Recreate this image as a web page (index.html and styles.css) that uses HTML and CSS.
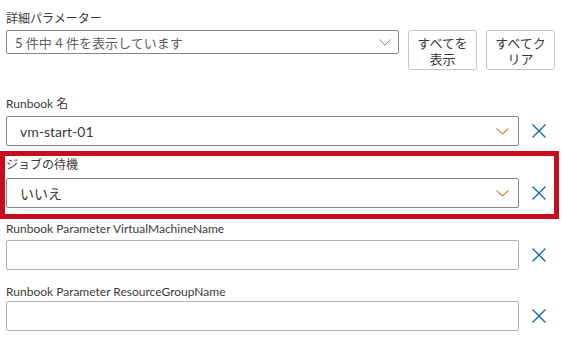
FILE: index.html
```html
<!DOCTYPE html>
<html lang="ja">
<head>
<meta charset="utf-8">
<link rel="stylesheet" href="styles.css">
</head>
<body>
<div class="page">
  <div class="filter">
    <div class="label">詳細パラメーター</div>
    <div class="filter-row">
      <div class="multi">
        <span class="multi-text">5 件中 4 件を表示しています</span>
        <svg class="chev-gray" width="12" height="7" viewBox="0 0 12 7"><path d="M0.5 0.5 L6 6 L11.5 0.5" fill="none" stroke="#8a8886" stroke-width="1"/></svg>
      </div>
      <button class="btn">すべてを<br>表示</button>
      <button class="btn">すべてク<br>リア</button>
    </div>
  </div>

  <div class="field first">
    <div class="label">Runbook 名</div>
    <div class="row">
      <div class="select"><span class="value">vm-start-01</span>
        <svg class="chev" width="13" height="7" viewBox="0 0 13 7"><path d="M0.5 0.5 L6.5 6 L12.5 0.5" fill="none" stroke="#d3884a" stroke-width="1.2"/></svg>
      </div>
      <svg class="x" width="14" height="14" viewBox="0 0 14 14"><path d="M0.5 0.5 L13.5 13.5 M13.5 0.5 L0.5 13.5" stroke="#0f6cbd" stroke-width="1.4"/></svg>
    </div>
  </div>

  <div class="highlight">
    <div class="label">ジョブの待機</div>
    <div class="row">
      <div class="select"><span class="value">いいえ</span>
        <svg class="chev" width="13" height="7" viewBox="0 0 13 7"><path d="M0.5 0.5 L6.5 6 L12.5 0.5" fill="none" stroke="#d3884a" stroke-width="1.2"/></svg>
      </div>
      <svg class="x" width="14" height="14" viewBox="0 0 14 14"><path d="M0.5 0.5 L13.5 13.5 M13.5 0.5 L0.5 13.5" stroke="#0f6cbd" stroke-width="1.4"/></svg>
    </div>
  </div>

  <div class="field after">
    <div class="label">Runbook Parameter VirtualMachineName</div>
    <div class="row">
      <div class="input"></div>
      <svg class="x" width="14" height="14" viewBox="0 0 14 14"><path d="M0.5 0.5 L13.5 13.5 M13.5 0.5 L0.5 13.5" stroke="#0f6cbd" stroke-width="1.4"/></svg>
    </div>
  </div>

  <div class="field next">
    <div class="label">Runbook Parameter ResourceGroupName</div>
    <div class="row">
      <div class="input"></div>
      <svg class="x" width="14" height="14" viewBox="0 0 14 14"><path d="M0.5 0.5 L13.5 13.5 M13.5 0.5 L0.5 13.5" stroke="#0f6cbd" stroke-width="1.4"/></svg>
    </div>
  </div>
</div>
</body>
</html>
```
FILE: styles.css
```css
* { box-sizing: border-box; }
html, body { margin: 0; padding: 0; background: #ffffff; }
body {
  font-family: "Lato", "Noto Sans CJK JP", sans-serif;
  color: #3b3a39;
  width: 562px;
  height: 344px;
  overflow: hidden;
}
.page { display: flex; flex-direction: column; }
.label {
  font-size: 12px;
  line-height: 16px;
  height: 16px;
  color: #3b3a39;
}
.filter { padding: 11px 0 0 6px; }
.filter-row {
  display: flex;
  align-items: flex-start;
  margin-top: 3px;
}
.multi {
  width: 393px;
  height: 24px;
  border: 1px solid #8a8886;
  border-radius: 2px;
  display: flex;
  align-items: center;
  justify-content: space-between;
  padding: 0 7px 0 8px;
}
.multi-text { font-size: 13px; color: #605e5c; }
.chev-gray { display: block; }
.btn {
  width: 69px;
  height: 40px;
  margin-left: 9px;
  background: #ffffff;
  border: 1px solid #c8c6c4;
  border-radius: 3px;
  font-family: "Lato", "Noto Sans CJK JP", sans-serif;
  font-size: 13px;
  line-height: 16px;
  color: #3b3a39;
  padding: 2px 0 0;
  text-align: center;
}
.field { padding-left: 6px; }
.field.first { margin-top: 26px; }
.row {
  display: flex;
  align-items: center;
}
.select, .input {
  width: 513px;
  height: 30px;
  border-radius: 2px;
}
.select {
  border: 1px solid #8a8886;
  display: flex;
  align-items: center;
  justify-content: space-between;
  padding: 0 9px 0 13px;
}
.input { border: 1px solid #b3b0ad; }
.value { font-size: 14px; color: #3b3a39; }
.chev { display: block; }
.x { display: block; margin-left: 13px; flex: none; }
.field .label { margin-bottom: 4px; }
.highlight {
  margin-top: 5px;
  width: 559px;
  border: 5px solid #c50f1f;
  padding: 1px 0 6px 1px;
}
.highlight .label { margin-bottom: 5px; }
.field.after { margin-top: 2px; }
.field.after .label { margin-bottom: 3px; }
.field.next { margin-top: 14px; }
.field.next .label { margin-bottom: 1px; }
```
